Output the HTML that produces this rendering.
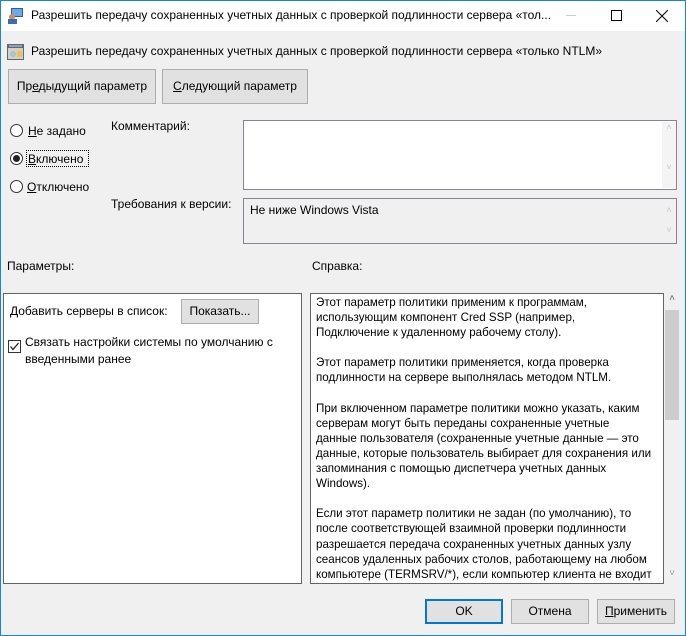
<!DOCTYPE html>
<html><head><meta charset="utf-8"><style>
*{box-sizing:border-box;margin:0;padding:0}
body{width:686px;height:636px;overflow:hidden;font-family:"Liberation Sans","DejaVu Sans",sans-serif;font-size:12px;color:#000;background:#f0f0f0;position:relative}
.a{position:absolute;white-space:nowrap}
.btn{position:absolute;background:#e1e1e1;border:1px solid #adadad;text-align:center}
.box{position:absolute;border:1px solid #828790;background:#fff}
.rad{position:absolute;width:13px;height:13px;border:1px solid #333;border-radius:50%;background:#fff}
u{text-decoration:underline}
</style></head><body>
<div class="a" style="left:0;top:0;width:686px;height:31px;background:#fff"></div>
<svg class="a" style="left:7px;top:7px" width="17" height="17"><rect x="4" y="1" width="12" height="9" fill="#2a5aa8"/><rect x="5" y="2" width="10" height="7" fill="#6fa8e8"/><circle cx="5" cy="10" r="3" fill="#c89058"/><rect x="1" y="12" width="9" height="5" fill="#3b6bb5"/></svg>
<div class="a" style="left:31px;top:8px;font-size:12px">Разрешить передачу сохраненных учетных данных с проверкой подлинности сервера «тол...</div>
<div class="a" style="left:566px;top:15px;width:10px;height:1px;background:#ccc"></div>
<div class="a" style="left:611px;top:10px;width:11px;height:11px;border:1px solid #000"></div>
<svg class="a" style="left:656px;top:10px" width="12" height="12"><path d="M0 0L12 12M12 0L0 12" stroke="#000" stroke-width="1"/></svg>
<svg class="a" style="left:7px;top:44px" width="17" height="16"><rect x="0" y="0" width="17" height="16" fill="#5a6a7a"/><rect x="1" y="4" width="15" height="11" fill="#d8d0b8"/><rect x="2" y="1" width="13" height="2" fill="#8fa0c0"/><circle cx="6" cy="10" r="3" fill="#a8c0d8"/><rect x="10" y="7" width="5" height="6" fill="#e8c060"/></svg>
<div class="a" style="left:31px;top:44px">Разрешить передачу сохраненных учетных данных с проверкой подлинности сервера «только NTLM»</div>
<div class="btn" style="left:8px;top:69px;width:148px;height:35px;line-height:33px">Пр<u>е</u>дыдущий параметр</div>
<div class="btn" style="left:162px;top:69px;width:146px;height:35px;line-height:33px"><u>С</u>ледующий параметр</div>

<div class="rad" style="left:10px;top:124px"></div><div class="a" style="left:28px;top:124px"><u>Н</u>е задано</div>
<div class="rad" style="left:10px;top:152px"></div><div class="a" style="left:13px;top:155px;width:7px;height:7px;border-radius:50%;background:#222"></div>
<div class="a" style="left:26px;top:150px;width:63px;height:17px;border:1px dotted #000;padding:1px 0 0 1px"><u>В</u>ключено</div>
<div class="rad" style="left:10px;top:180px"></div><div class="a" style="left:27px;top:180px"><u>О</u>тключено</div>

<div class="a" style="left:111px;top:119px">Комментарий:</div>
<div class="box" style="left:243px;top:120px;width:434px;height:70px"></div>
<div class="a" style="left:662px;top:122px;width:14px;height:66px;background:#f4f4f4;color:#c8c8c8;font-size:9px;text-align:center">˄<br><br><br><br>˅</div>
<div class="a" style="left:111px;top:197px">Требования к версии:</div>
<div class="a" style="left:243px;top:198px;width:434px;height:46px;border:1px solid #828790;background:#f0f0f0;padding:4px 0 0 6px">Не ниже Windows Vista</div>
<div class="a" style="left:662px;top:200px;width:14px;height:42px;color:#c8c8c8;font-size:9px;text-align:center;line-height:20px">˄<br>˅</div>

<div class="a" style="left:7px;top:259px">Параметры:</div>
<div class="a" style="left:312px;top:259px">Справка:</div>

<div class="box" style="left:3px;top:293px;width:299px;height:291px;border-color:#646464"></div>
<div class="a" style="left:10px;top:304px">Добавить серверы в список:</div>
<div class="btn" style="left:181px;top:299px;width:78px;height:25px;line-height:23px">Показать...</div>
<div class="a" style="left:8px;top:340px;width:13px;height:13px;border:1px solid #333;background:#fff"></div>
<svg class="a" style="left:9px;top:341px" width="11" height="11"><path d="M1.5 5.5L4 8.5L9.5 2" stroke="#222" stroke-width="1.3" fill="none"/></svg>
<div class="a" style="left:25px;top:334px;line-height:17px">Связать настройки системы по умолчанию с<br>введенными ранее</div>

<div class="box" style="left:310px;top:293px;width:354px;height:291px;border-color:#646464;overflow:hidden">
<div style="position:absolute;left:5px;top:1px;white-space:nowrap;line-height:15.1px;font-size:11.6px">
Этот параметр политики применим к программам,<br>использующим компонент Cred SSP (например,<br>Подключение к удаленному рабочему столу).<br><br>
Этот параметр политики применяется, когда проверка<br>подлинности на сервере выполнялась методом NTLM.<br><br>
При включенном параметре политики можно указать, каким<br>серверам могут быть переданы сохраненные учетные<br>данные пользователя (сохраненные учетные данные — это<br>данные, которые пользователь выбирает для сохранения или<br>запоминания с помощью диспетчера учетных данных<br>Windows).<br><br>
Если этот параметр политики не задан (по умолчанию), то<br>после соответствующей взаимной проверки подлинности<br>разрешается передача сохраненных учетных данных узлу<br>сеансов удаленных рабочих столов, работающему на любом<br>компьютере (TERMSRV/*), если компьютер клиента не входит</div></div>
<div class="a" style="left:664px;top:293px;width:16px;height:291px;background:#f0f0f0"></div>
<div class="a" style="left:665px;top:310px;width:14px;height:110px;background:#cdcdcd"></div>
<div class="a" style="left:664px;top:293px;width:16px;font-size:10px;text-align:center;color:#606060">˄</div>
<div class="a" style="left:664px;top:568px;width:16px;font-size:10px;text-align:center;color:#a0a0a0">˅</div>

<div class="btn" style="left:425px;top:599px;width:78px;height:25px;line-height:21px;border:2px solid #0078d7">OK</div>
<div class="btn" style="left:511px;top:599px;width:78px;height:25px;line-height:23px">Отмена</div>
<div class="btn" style="left:597px;top:599px;width:78px;height:25px;line-height:23px"><u>П</u>рименить</div>

<div class="a" style="left:0;top:0;width:1px;height:636px;background:#1883d7"></div>
<div class="a" style="left:685px;top:0;width:1px;height:636px;background:#1883d7"></div>
<div class="a" style="left:0;top:635px;width:686px;height:1px;background:#1883d7"></div>
<div class="a" style="left:0;top:0;width:686px;height:1px;background:#1883d7"></div>
</body></html>
